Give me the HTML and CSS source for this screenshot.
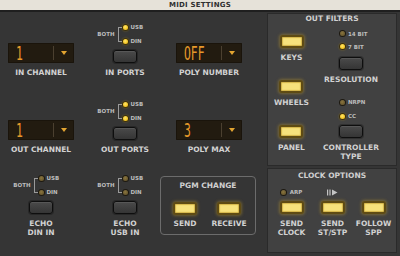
FILE: index.html
```html
<!DOCTYPE html>
<html>
<head>
<meta charset="utf-8">
<title>MIDI Settings</title>
<link rel="stylesheet" href="styles.css">
</head>
<body>
<div class="titlebar">MIDI SETTINGS</div>
<div class="main">
  <div class="left">
    <div class="row">
      <div class="cell">
        <div class="display"><div class="digits"><span>1</span></div><div class="drop"><i class="tri"></i></div></div>
        <div class="lbl">IN CHANNEL</div>
      </div>
      <div class="cell">
        <div class="ledgroup">
          <div class="both"><span>BOTH</span><i class="bracket"></i></div>
          <i class="led on ra"></i><span class="sl ra">USB</span>
          <i class="led on rb"></i><span class="sl rb">DIN</span>
        </div>
        <div class="btn"></div>
        <div class="lbl">IN PORTS</div>
      </div>
      <div class="cell">
        <div class="display"><div class="digits"><span>OFF</span></div><div class="drop"><i class="tri"></i></div></div>
        <div class="lbl">POLY NUMBER</div>
      </div>
    </div>
    <div class="row">
      <div class="cell">
        <div class="display"><div class="digits"><span>1</span></div><div class="drop"><i class="tri"></i></div></div>
        <div class="lbl">OUT CHANNEL</div>
      </div>
      <div class="cell">
        <div class="ledgroup">
          <div class="both"><span>BOTH</span><i class="bracket"></i></div>
          <i class="led on ra"></i><span class="sl ra">USB</span>
          <i class="led on rb"></i><span class="sl rb">DIN</span>
        </div>
        <div class="btn"></div>
        <div class="lbl">OUT PORTS</div>
      </div>
      <div class="cell">
        <div class="display"><div class="digits"><span>3</span></div><div class="drop"><i class="tri"></i></div></div>
        <div class="lbl">POLY MAX</div>
      </div>
    </div>
    <div class="row">
      <div class="cell">
        <div class="ledgroup">
          <div class="both"><span>BOTH</span><i class="bracket"></i></div>
          <i class="led ra"></i><span class="sl ra">USB</span>
          <i class="led rb"></i><span class="sl rb">DIN</span>
        </div>
        <div class="btn"></div>
        <div class="lbl">ECHO<br>DIN IN</div>
      </div>
      <div class="cell">
        <div class="ledgroup">
          <div class="both"><span>BOTH</span><i class="bracket"></i></div>
          <i class="led ra"></i><span class="sl ra">USB</span>
          <i class="led rb"></i><span class="sl rb">DIN</span>
        </div>
        <div class="btn"></div>
        <div class="lbl">ECHO<br>USB IN</div>
      </div>
      <div class="cell">
        <div class="pgm">
          <div class="ptitle">PGM CHANGE</div>
          <div class="pgm-cols">
            <div class="pcol"><div class="ledbtn"></div><div class="lbl tight">SEND</div></div>
            <div class="pcol"><div class="ledbtn"></div><div class="lbl tight">RECEIVE</div></div>
          </div>
        </div>
      </div>
    </div>
  </div>
  <div class="right">
    <div class="panel filters">
      <div class="ptitle">OUT FILTERS</div>
      <div class="fgrid">
        <div class="fcol-a">
          <div class="unit"><div class="ledbtn"></div><div class="lbl">KEYS</div></div>
          <div class="unit"><div class="ledbtn"></div><div class="lbl">WHEELS</div></div>
          <div class="unit"><div class="ledbtn"></div><div class="lbl">PANEL</div></div>
        </div>
        <div class="fcol-b">
          <div class="fleds g1">
            <div class="fled"><i class="led"></i><span class="sl">14 BIT</span></div>
            <div class="fled"><i class="led on"></i><span class="sl">7 BIT</span></div>
          </div>
          <div class="btn"></div>
          <div class="lbl">RESOLUTION</div>
          <div class="fleds g2">
            <div class="fled"><i class="led"></i><span class="sl">NRPN</span></div>
            <div class="fled"><i class="led on"></i><span class="sl">CC</span></div>
          </div>
          <div class="btn"></div>
          <div class="lbl">CONTROLLER<br>TYPE</div>
        </div>
      </div>
    </div>
    <div class="panel clock">
      <div class="ptitle ctitle">CLOCK OPTIONS</div>
      <div class="cgrid">
        <div class="ccol">
          <div class="ctop"><i class="led"></i><span class="sl">ARP</span></div>
          <div class="ledbtn"></div>
          <div class="lbl">SEND<br>CLOCK</div>
        </div>
        <div class="ccol">
          <div class="ctop"><svg class="playpause" width="11" height="7" viewBox="0 0 11 7"><rect x="0" y="0.5" width="1.2" height="6" fill="#c4c4c4"/><rect x="2.4" y="0.5" width="1.2" height="6" fill="#c4c4c4"/><polygon points="5,0.5 10.5,3.5 5,6.5" fill="#c4c4c4"/></svg></div>
          <div class="ledbtn"></div>
          <div class="lbl">SEND<br>ST/STP</div>
        </div>
        <div class="ccol">
          <div class="ctop"></div>
          <div class="ledbtn"></div>
          <div class="lbl">FOLLOW<br>SPP</div>
        </div>
      </div>
    </div>
  </div>
</div>
</body>
</html>
```

FILE: styles.css
```css
* { box-sizing: border-box; margin: 0; padding: 0; }

body {
  width: 400px;
  height: 256px;
  overflow: hidden;
  background: #353535;
  font-family: "DejaVu Sans", "Liberation Sans", sans-serif;
  font-weight: bold;
}

.titlebar {
  height: 12px;
  background: #e6e2d9;
  border-bottom: 2px solid #1f1f1f;
  text-align: center;
  font-size: 7px;
  line-height: 10px;
  color: #303030;
  letter-spacing: 0.2px;
}

.main {
  display: flex;
  height: 244px;
}

.left {
  width: 267px;
  display: grid;
  grid-template-rows: 65px 77px 83px;
}

.row {
  display: grid;
  grid-template-columns: 82px 86px 82px;
}

.cell {
  display: flex;
  flex-direction: column;
  align-items: center;
  justify-content: flex-end;
}

.lbl {
  font-size: 7.5px;
  line-height: 9px;
  margin-top: 5px;
  color: #d2d2d2;
  text-align: center;
  white-space: nowrap;
}

.lbl.tight { margin-top: 4px; }

/* LCD display */
.display {
  width: 66px;
  height: 20px;
  background: #221b10;
  border-radius: 1px;
  display: flex;
  box-shadow: inset 0 0 0 1px #1a140b;
}

.digits {
  flex: 1;
  padding-left: 8px;
  overflow: hidden;
}

.digits span {
  display: inline-block;
  font-family: "DejaVu Sans Mono", monospace;
  font-weight: normal;
  font-size: 19px;
  line-height: 20px;
  color: #e6992a;
  transform: scaleX(0.6);
  transform-origin: left center;
}

.drop {
  width: 21px;
  margin: 3px 0;
  border-left: 1px solid #4b4030;
  display: flex;
  align-items: center;
  justify-content: center;
}

.tri {
  width: 0;
  height: 0;
  border-left: 3px solid transparent;
  border-right: 3px solid transparent;
  border-top: 4px solid #e2a431;
}

/* Buttons */
.btn {
  width: 24px;
  height: 13px;
  border-radius: 3px;
  background: linear-gradient(#4a4a4a, #353535);
  border: 1px solid #0e0e0e;
  box-shadow: 0 0 0 1px rgba(0, 0, 0, 0.25), inset 0 1px 0 rgba(255, 255, 255, 0.08);
}

.ledbtn {
  width: 24px;
  height: 13px;
  border-radius: 3px;
  background: #f7e27c;
  border: 2px solid #5e4b14;
  box-shadow: 0 0 3px 1px rgba(220, 175, 40, 0.35), inset 0 0 1px 1px rgba(190, 150, 40, 0.6);
}

/* LEDs */
.led {
  display: block;
  width: 5px;
  height: 5px;
  border-radius: 50%;
  background: radial-gradient(circle at 45% 40%, #8a7640, #655429 75%);
  box-shadow: 0 0 0 1px #1d1910;
}

.led.on {
  background: radial-gradient(circle at 45% 40%, #ffe66a, #f2c018 70%);
  box-shadow: 0 0 0 1px #3a2f10, 0 0 2px 1px rgba(255, 200, 0, 0.35);
}

.sl {
  font-size: 5.5px;
  color: #bdbdbd;
  white-space: nowrap;
}

.ledgroup {
  width: 100%;
  display: grid;
  grid-template-columns: 1fr 5px 1fr;
  grid-template-rows: 14px 14px;
  align-items: center;
  margin-bottom: 2px;
}

.ledgroup .ra { grid-row: 1; }
.ledgroup .rb { grid-row: 2; }
.ledgroup .led { grid-column: 2; }
.ledgroup .sl { grid-column: 3; padding-left: 3px; }

.both {
  grid-column: 1;
  grid-row: 1 / 3;
  display: flex;
  align-items: center;
  justify-content: flex-end;
  font-size: 5.5px;
  color: #bdbdbd;
}

.bracket {
  display: block;
  width: 4px;
  height: 15px;
  border: 1px solid #9a9a9a;
  border-right: 0;
  margin-left: 3px;
  margin-right: 1px;
}

/* PGM change box */
.pgm {
  width: 96px;
  height: 59px;
  margin: 0 -6px 2px -8px;
  border: 1px solid #6c6c6c;
  border-radius: 4px;
  padding-top: 4px;
}

.ptitle {
  font-size: 7.5px;
  line-height: 9px;
  text-align: center;
  color: #d0d0d0;
}

.pgm-cols {
  display: grid;
  grid-template-columns: 44px 44px;
  padding-left: 2px;
  margin-top: 12px;
}

.pcol {
  display: flex;
  flex-direction: column;
  align-items: center;
}

/* Right panels */
.right {
  width: 130px;
  display: flex;
  flex-direction: column;
  gap: 2px;
  padding-top: 1px;
}

.panel {
  background: #414141;
  border: 1px solid #2a2a2a;
}

.filters { height: 153px; }
.clock { height: 85px; }

.filters .ptitle { line-height: 10px; }

.fgrid {
  display: grid;
  grid-template-columns: 47px 72px;
}

.fcol-a {
  display: flex;
  flex-direction: column;
  align-items: center;
  padding-top: 11px;
  gap: 18px;
}

.unit {
  display: flex;
  flex-direction: column;
  align-items: center;
}

.fcol-b {
  display: flex;
  flex-direction: column;
  align-items: center;
}

.fleds {
  align-self: flex-start;
  margin-left: 25px;
  display: flex;
  flex-direction: column;
}

.fled {
  display: flex;
  align-items: center;
  gap: 3px;
}

.g1 { margin-top: 3px; margin-bottom: 4px; }
.g1 .fled { height: 13px; }
.g2 { margin-top: 11px; margin-bottom: 2px; }
.g2 .fled { height: 14px; }

.ctitle { line-height: 10px; padding-top: 2px; }

.cgrid {
  display: grid;
  grid-template-columns: repeat(3, 41px);
  padding-left: 3px;
}

.ccol {
  display: flex;
  flex-direction: column;
  align-items: center;
}

.ctop {
  height: 10px;
  margin-top: 6px;
  margin-bottom: 4px;
  display: flex;
  align-items: center;
  gap: 4px;
}

.playpause { display: block; }
```
